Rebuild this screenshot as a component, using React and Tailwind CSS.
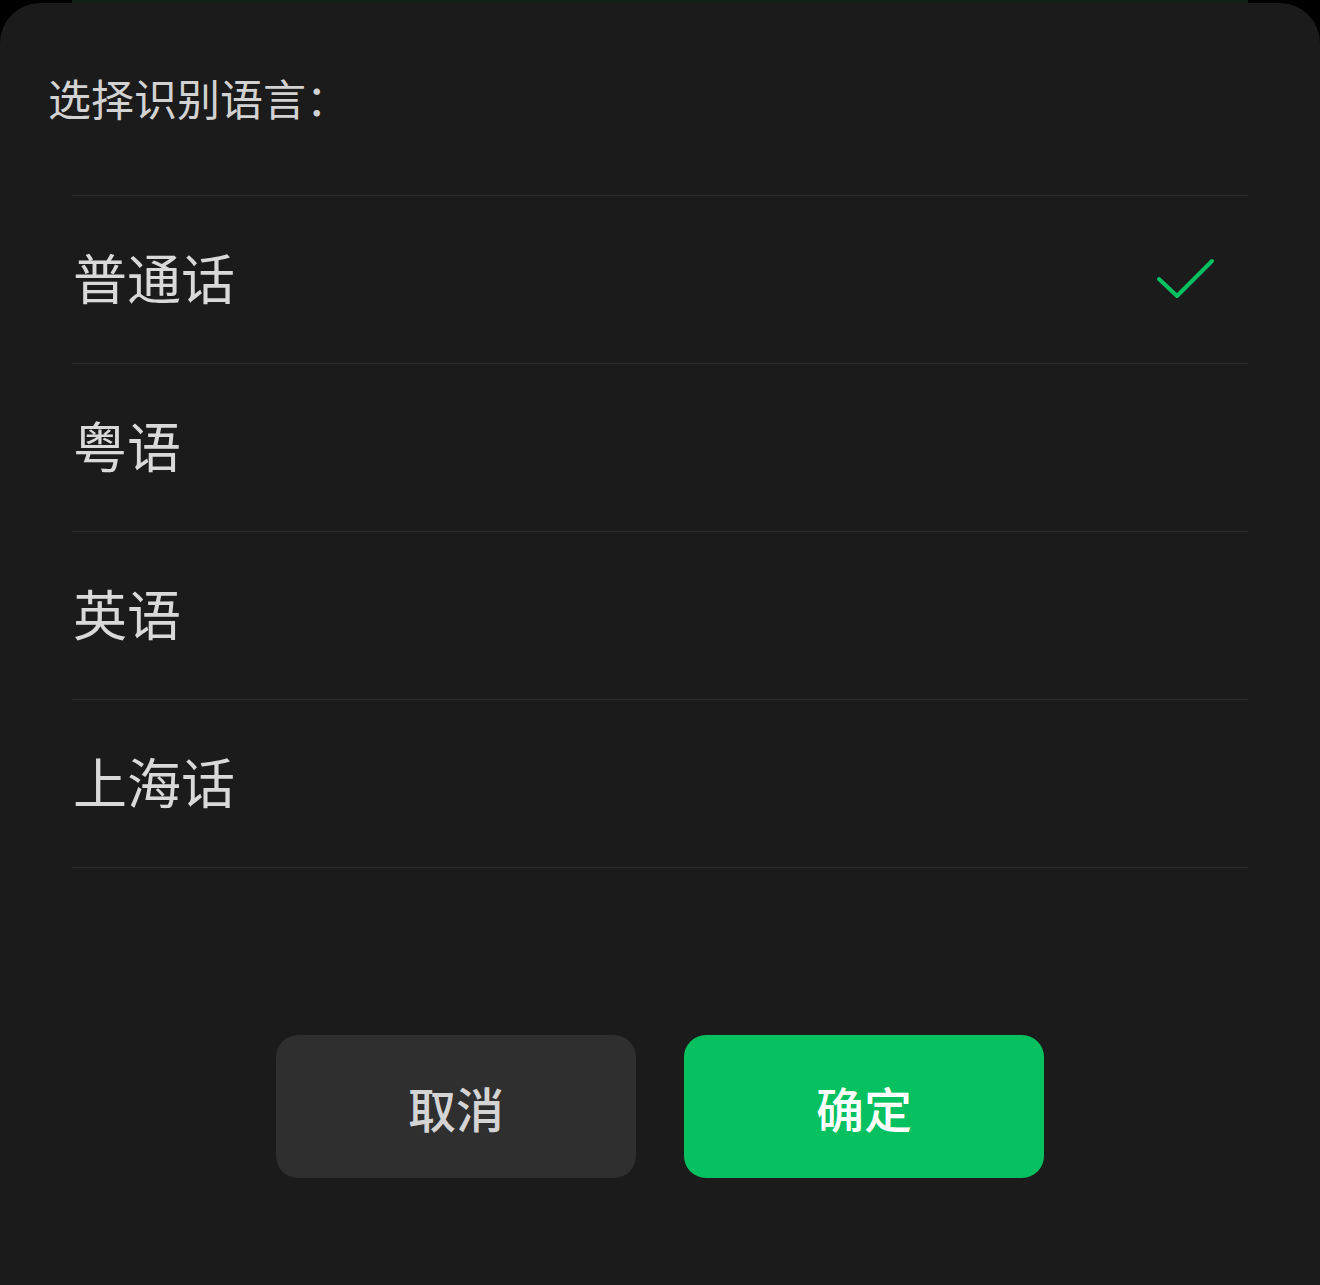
const languages = [
  { id: 'mandarin', label: '普通话' },
  { id: 'cantonese', label: '粤语' },
  { id: 'english', label: '英语' },
  { id: 'shanghainese', label: '上海话' },
];

export default function App() {
  const selected = 'mandarin';

  return (
    <div
      className="w-[1320px] h-[1285px] bg-black overflow-hidden flex flex-col"
      style={{ fontFamily: '"Noto Sans CJK SC", "Noto Sans", sans-serif' }}
    >
      {/* page behind the sheet */}
      <div className="h-[3px] mx-[72px] bg-[#0f1f16] shrink-0" />

      {/* bottom sheet */}
      <div className="flex-1 bg-[#1b1b1b] rounded-t-[40px] flex flex-col">
        <div className="pt-[64px] pl-[48px] h-[192px]">
          <p className="text-[43px] leading-[60px] text-[#d2d2d2]">选择识别语言：</p>
        </div>

        <ul className="mx-[72px] border-t border-[#2c2c2c]">
          {languages.map((lang) => (
            <li
              key={lang.id}
              className="h-[168px] border-b border-[#2c2c2c] flex items-center justify-between pl-[1px] pr-[32px]"
            >
              <span className="text-[54px] leading-none text-[#d9d9d9] -mt-[6px]">{lang.label}</span>
              {selected === lang.id && (
                <svg width="60" height="42" viewBox="0 0 60 42" fill="none" className="-mt-[2px]">
                  <path
                    d="M3 21 L21 38 L56 3"
                    stroke="#07c160"
                    strokeWidth="4"
                    strokeLinecap="round"
                    strokeLinejoin="round"
                  />
                </svg>
              )}
            </li>
          ))}
        </ul>

        <div className="mt-[167px] flex justify-center gap-[48px]">
          <button className="w-[360px] h-[143px] rounded-[22px] bg-[#2f2f2f] text-[#d4d4d4] text-[48px] font-medium">
            取消
          </button>
          <button className="w-[360px] h-[143px] rounded-[22px] bg-[#07c160] text-white text-[48px] font-medium">
            确定
          </button>
        </div>
      </div>
    </div>
  );
}
